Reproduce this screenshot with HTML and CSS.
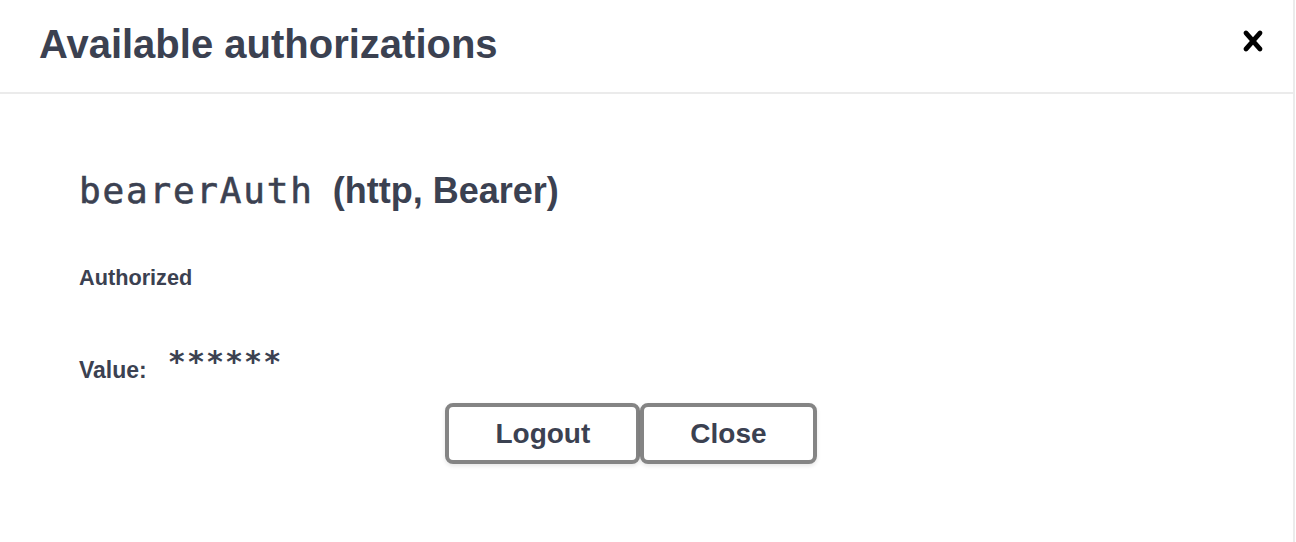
FILE: index.html
```html
<!DOCTYPE html>
<html lang="en">
<head>
<meta charset="utf-8">
<title>Available authorizations</title>
<link rel="stylesheet" href="styles.css">
</head>
<body>
<div class="modal">
  <div class="modal-header">
    <h3 class="modal-title">Available authorizations</h3>
    <button class="close-modal" type="button" aria-label="Close">
      <svg width="40" height="40" viewBox="0 0 20 20" aria-hidden="true"><path d="M14.348 14.849c-.469.469-1.229.469-1.697 0L10 11.819l-2.651 3.029c-.469.469-1.229.469-1.697 0-.469-.469-.469-1.229 0-1.697l2.758-3.15-2.759-3.152c-.469-.469-.469-1.228 0-1.697.469-.469 1.228-.469 1.697 0L10 8.183l2.651-3.031c.469-.469 1.228-.469 1.697 0 .469.469.469 1.229 0 1.697l-2.758 3.152 2.758 3.15c.469.469.469 1.229 0 1.698z"/></svg>
    </button>
  </div>
  <div class="modal-content">
    <h4 class="scheme-title"><code class="scheme-name">bearerAuth</code>&nbsp;(http, Bearer)</h4>
    <h6 class="status">Authorized</h6>
    <div class="value-row">
      <label class="value-label">Value:</label>
      <code class="value-code"> ******</code>
    </div>
    <div class="btn-wrapper">
      <button class="btn" type="button">Logout</button>
      <button class="btn btn-done" type="button">Close</button>
    </div>
  </div>
</div>
</body>
</html>
```
FILE: styles.css
```css
html, body {
  margin: 0;
  padding: 0;
  background: #ffffff;
}

body {
  font-family: "Liberation Sans", Arial, Helvetica, sans-serif;
  color: #3b4151;
}

.modal {
  width: 1295px;
  height: 542px;
  box-sizing: border-box;
  border-right: 2px solid #ebebeb;
  background: #ffffff;
}

.modal-header {
  display: flex;
  align-items: flex-start;
  height: 94px;
  box-sizing: border-box;
  border-bottom: 2px solid #ebebeb;
}

.modal-title {
  flex: 1;
  margin: 0;
  padding: 22px 0 0 39px;
  font-size: 40px;
  line-height: 45px;
  font-weight: 700;
  color: #3b4151;
}

.close-modal {
  border: none;
  background: none;
  padding: 21px 20px 0;
  margin: 0;
  cursor: pointer;
  line-height: 0;
}

.close-modal svg {
  display: block;
  fill: #000000;
}

.modal-content {
  padding: 0 80px 0 79px;
}

.scheme-title {
  margin: 76px 0 53px;
  font-size: 36px;
  line-height: 42px;
  font-weight: 700;
  color: #3b4151;
}

.scheme-name {
  font-family: "DejaVu Sans Mono", "Liberation Mono", monospace;
  font-weight: 400;
  font-size: 36px;
  letter-spacing: 1.8px;
  margin-right: 9px;
  color: #3b4151;
  -webkit-text-stroke: 0.6px #3b4151;
}

.status {
  margin: 0;
  font-size: 21.7px;
  line-height: 25px;
  font-weight: 700;
  color: #3b4151;
}

.value-row {
  display: flex;
  align-items: flex-start;
  margin-top: 67px;
}

.value-label {
  font-size: 23px;
  line-height: 27px;
  font-weight: 700;
  color: #3b4151;
}

.value-code {
  font-family: "DejaVu Sans Mono", "Liberation Mono", monospace;
  font-size: 30px;
  line-height: 27px;
  font-weight: 700;
  letter-spacing: 1px;
  margin: -9px 0 0 2px;
  white-space: pre;
  color: #3b4151;
}

.btn-wrapper {
  display: flex;
  justify-content: center;
  margin-top: 19px;
}

.btn {
  font-family: "Liberation Sans", Arial, Helvetica, sans-serif;
  font-size: 28px;
  line-height: 32px;
  font-weight: 700;
  color: #3b4151;
  background: #ffffff;
  padding: 11px 46px 10px;
  border: 4px solid #848484;
  border-radius: 8px;
  box-shadow: 0 2px 4px rgba(0, 0, 0, 0.1);
  margin: 0;
  cursor: pointer;
}

.btn-done {
  margin-right: 30px;
}
```
